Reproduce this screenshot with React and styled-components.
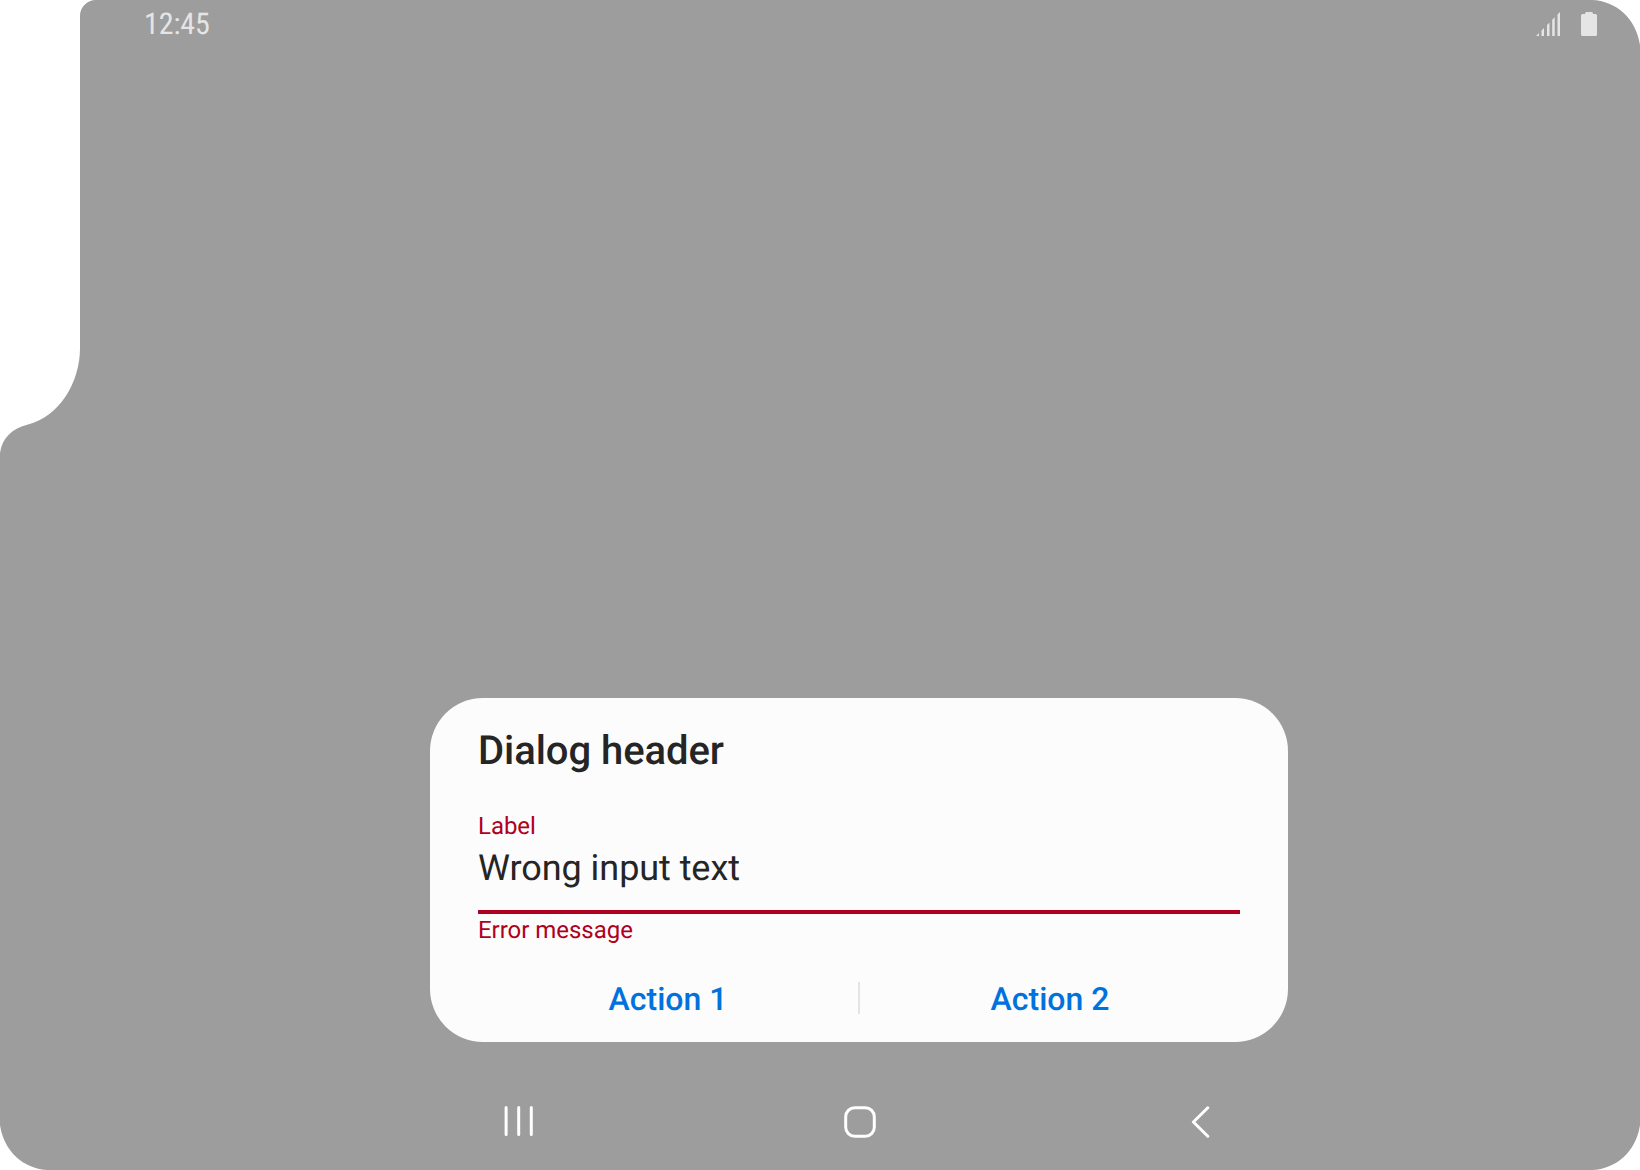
import React from "react";
import styled, { createGlobalStyle } from "styled-components";

const GlobalStyle = createGlobalStyle`
  * { box-sizing: border-box; }
  body {
    margin: 0;
    background: #ffffff;
    font-family: Roboto, "Noto Sans", sans-serif;
    text-rendering: geometricPrecision;
  }
`;

const OUTLINE =
  "M96 0 H1592 C1616 1 1636 18 1640 45 V1125 C1636 1152 1616 1169 1592 1170 H48 C24 1169 4 1152 0 1125 V453 C2 438 12 428.5 28 424.5 C58 417 80 384 80 348 V16 C80 7 87 0 96 0 Z";

const Screen = styled.main`
  display: flex;
  flex-direction: column;
  width: 1640px;
  height: 1170px;
  padding-left: 80px;
  background: #9d9d9d;
  clip-path: path("${OUTLINE}");
`;

const StatusBar = styled.header`
  display: flex;
  align-items: center;
  justify-content: space-between;
  height: 48px;
  padding: 0 43px 0 64px;
  color: #e5e5e5;
`;

const Clock = styled.time`
  width: 80px;
  padding-top: 2px;
  font-size: 30px;
  line-height: 48px;
  font-family: "Roboto Condensed", Roboto, sans-serif;
  font-stretch: 75%;
  letter-spacing: -0.1px;
`;

const StatusIcons = styled.div`
  display: flex;
  gap: 20px;
`;

const Icon = styled.svg`
  display: block;
  fill: ${(p) => (p.$outlined ? "none" : "currentColor")};
  stroke: ${(p) => (p.$outlined ? "currentColor" : "none")};
  stroke-width: 3;
  stroke-linecap: round;
  stroke-linejoin: round;
`;

const DialogArea = styled.div`
  flex: 1;
  display: flex;
  align-items: flex-end;
  padding-left: 350px;
`;

const Dialog = styled.section`
  display: flex;
  flex-direction: column;
  width: 858px;
  height: 344px;
  padding: 30px 48px 0;
  border-radius: 53px;
  background: #fcfcfc;
`;

const Title = styled.h1`
  margin: 0 0 36px;
  color: #252525;
  font-size: 40px;
  font-weight: 500;
  line-height: 46px;
  letter-spacing: -0.06px;
`;

const FieldText = styled.span`
  color: #b00020;
  font-size: 24px;
  line-height: 32px;
  letter-spacing: -0.03px;
`;

const Field = styled.div`
  display: flex;
  flex-direction: column;
`;

const Value = styled.div`
  height: 72px;
  padding-top: 2px;
  border-bottom: 4px solid #b00020;
  color: #252525;
  font-size: 36px;
  line-height: 48px;
  letter-spacing: -0.06px;
`;

const Actions = styled.div`
  display: flex;
  align-items: center;
  margin-top: 24px;
  height: 56px;
`;

const Divider = styled.div`
  width: 2px;
  height: 32px;
  background: #e4e4e4;
`;

const Action = styled.button`
  flex: 1;
  padding: 2px 0 0;
  border: 0;
  background: none;
  color: #0072de;
  font: 500 32px/56px Roboto, sans-serif;
  text-rendering: inherit;
`;

const NavBar = styled.nav`
  display: grid;
  grid-template-columns: repeat(3, 341px);
  justify-content: center;
  place-items: center;
  height: 96px;
  margin-top: 32px;
  color: #ffffff;
`;

export default function App() {
  return (
    <>
      <GlobalStyle />
      <Screen>
        <StatusBar>
          <Clock>12:45</Clock>
          <StatusIcons>
            <Icon width="25" height="24" viewBox="0 0 25 24">
              <path d="M0 24 L3 21 V24Z M5.5 24 V18.5 L8 16 V24Z M11 24 V13 L13.5 10.5 V24Z M16.2 24 V7.7 L18.7 5.2 V24Z M21.5 24 V2.5 L24 0 V24Z" />
            </Icon>
            <Icon width="16" height="24" viewBox="0 0 16 24">
              <path d="M4 1.5 Q4 0 5.5 0 H10.5 Q12 0 12 1.5 V2 H14.5 Q16 2 16 3.5 V22.5 Q16 24 14.5 24 H1.5 Q0 24 0 22.5 V3.5 Q0 2 1.5 2 H4Z" />
            </Icon>
          </StatusIcons>
        </StatusBar>
        <DialogArea>
          <Dialog role="dialog" aria-labelledby="dialog-title">
            <Title id="dialog-title">Dialog header</Title>
            <Field>
              <FieldText>Label</FieldText>
              <Value>Wrong input text</Value>
              <FieldText>Error message</FieldText>
            </Field>
            <Actions>
              <Action>Action 1</Action>
              <Divider />
              <Action>Action 2</Action>
            </Actions>
          </Dialog>
        </DialogArea>
        <NavBar>
          <Icon $outlined width="32" height="32" viewBox="0 0 32 32">
            <path d="M3.1 1.6 V28.6 M15.7 1.6 V28.6 M28.3 1.6 V28.6" />
          </Icon>
          <Icon $outlined width="32" height="32" viewBox="0 0 32 32">
            <rect x="1.7" y="1.7" width="28.6" height="28.6" rx="9" />
          </Icon>
          <Icon $outlined width="32" height="32" viewBox="0 0 32 32">
            <path d="M22.8 1.8 L8.4 16 L22.8 30.2" />
          </Icon>
        </NavBar>
      </Screen>
    </>
  );
}
